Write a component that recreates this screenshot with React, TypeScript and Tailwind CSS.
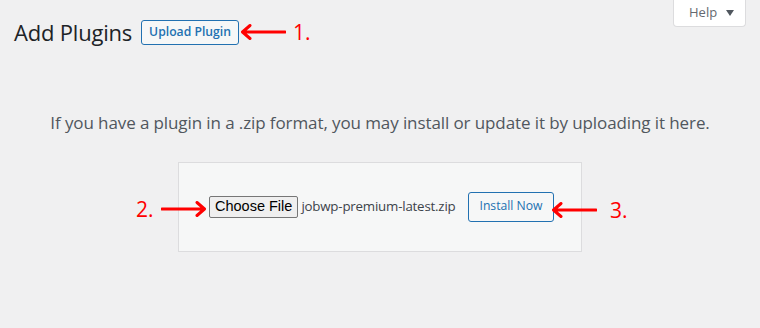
import React from "react";

const ui = { fontFamily: '"Open Sans", "Noto Sans", sans-serif' };
const arial = { fontFamily: '"Liberation Sans", Arial, sans-serif' };

function Arrow({ width = 46, dir = "left" }: { width?: number; dir?: "left" | "right" }) {
  const d =
    dir === "left"
      ? `M${width - 1} 8H3M10 1.5L2.5 8L10 14.5`
      : `M1 8H${width - 3}M${width - 10} 1.5L${width - 2.5} 8L${width - 10} 14.5`;
  return (
    <svg width={width} height="16" viewBox={`0 0 ${width} 16`} fill="none">
      <path d={d} stroke="#f00" strokeWidth="3" strokeLinecap="round" strokeLinejoin="round" />
    </svg>
  );
}

export default function App() {
  return (
    <div className="relative h-[328px] w-[760px] overflow-hidden bg-[#f0f0f1]" style={ui}>
      {/* help tab */}
      <div className="absolute right-[14px] top-0 flex h-[27px] w-[73px] items-center gap-[9px] rounded-b-[4px] border border-t-0 border-[#dcdcde] bg-white pl-[15px] text-[13px] text-[#646970]">
        <span>Help</span>
        <svg width="8" height="6" viewBox="0 0 8 6">
          <path d="M0 0H8L4 6Z" fill="#50575e" />
        </svg>
      </div>

      <div className="flex items-center pl-[14px] pt-[19px]">
        <h1 className="text-[22px] leading-[26px] tracking-[-0.2px] text-[#1d2327]">Add Plugins</h1>
        <button className="ml-[9px] h-[25px] rounded-[3px] border border-[#2271b1] bg-[#f6f7f7] px-[7px] text-[12.2px] font-semibold text-[#2271b1]">
          Upload Plugin
        </button>
        <div className="ml-[1px] flex items-center">
          <Arrow width={46} />
          <span className="ml-[7px] text-[21px] leading-none text-[#f00]">1.</span>
        </div>
      </div>

      <p className="pt-[65px] text-center text-[17px] tracking-[-0.1px] text-[#50575e]">
        If you have a plugin in a .zip format, you may install or update it by uploading it here.
      </p>

      <div className="relative mx-auto mt-[26px] w-[404px] border border-[#dcdcde] bg-[#f6f7f7]">
        <div className="flex items-center py-[29px] pl-[30px]">
          <button
            className="h-[22px] rounded-[2px] border border-[#767676] bg-[#efefef] px-[5px] text-[14.5px] leading-none text-black"
            style={arial}
          >
            Choose File
          </button>
          <span className="ml-[3px] text-[13.3px] tracking-[-0.2px] text-[#3c434a]">jobwp-premium-latest.zip</span>
          <button className="ml-[13px] h-[30px] rounded-[3px] border border-[#2271b1] bg-[#f6f7f7] px-[10px] text-[12.2px] text-[#2271b1]">
            Install Now
          </button>
        </div>

        {/* annotations */}
        <div className="absolute left-[-43px] top-[36px] flex items-center gap-[7px]">
          <span className="text-[21px] leading-none text-[#f00]">2.</span>
          <Arrow width={46} dir="right" />
        </div>
        <div className="absolute left-[372px] top-[37px] flex items-center">
          <Arrow width={46} />
          <span className="ml-[13px] text-[21px] leading-none text-[#f00]">3.</span>
        </div>
      </div>
    </div>
  );
}
